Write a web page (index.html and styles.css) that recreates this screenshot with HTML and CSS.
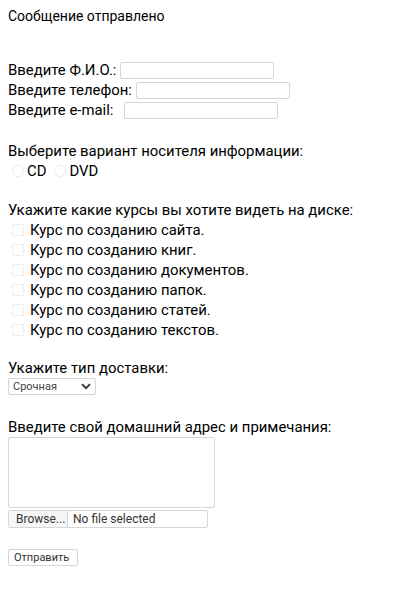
FILE: index.html
```html
<!DOCTYPE html>
<html lang="ru">
<head>
<meta charset="utf-8">
<link rel="stylesheet" href="styles.css">
</head>
<body>
<p class="msg">Сообщение отправлено</p>
<form class="form">
  <div class="group">
    <div class="row"><span>Введите Ф.И.О.:</span><span class="field w-fio"></span></div>
    <div class="row"><span>Введите телефон:</span><span class="field w-tel"></span></div>
    <div class="row"><span>Введите e-mail:</span><span class="field w-mail"></span></div>
  </div>
  <div class="group g2">
    <div class="row">Выберите вариант носителя информации:</div>
    <div class="row radios">
      <span class="radio"></span><span class="rl">CD</span>
      <span class="radio r2"></span><span class="rl">DVD</span>
    </div>
  </div>
  <div class="group g3">
    <div class="row">Укажите какие курсы вы хотите видеть на диске:</div>
    <div class="row chk"><span class="box"></span>Курс по созданию сайта.</div>
    <div class="row chk"><span class="box"></span>Курс по созданию книг.</div>
    <div class="row chk"><span class="box"></span>Курс по созданию документов.</div>
    <div class="row chk"><span class="box"></span>Курс по созданию папок.</div>
    <div class="row chk"><span class="box"></span>Курс по созданию статей.</div>
    <div class="row chk"><span class="box"></span>Курс по созданию текстов.</div>
  </div>
  <div class="group g4">
    <div class="row">Укажите тип доставки:</div>
    <div class="select"><span>Срочная</span>
      <svg class="chev" width="10" height="7" viewBox="0 0 10 7"><path d="M1 1.2 L5 5.2 L9 1.2" fill="none" stroke="#333" stroke-width="1.8"/></svg>
    </div>
  </div>
  <div class="group g5">
    <div class="row">Введите свой домашний адрес и примечания:</div>
    <div class="textarea"></div>
    <div class="file"><span class="browse">Browse...</span><span class="nofile">No file selected</span></div>
  </div>
  <div class="submit">Отправить</div>
</form>
</body>
</html>
```
FILE: styles.css
```css
html, body { margin: 0; padding: 0; background: #fff; }
body {
  padding: 0 8px;
  font-family: Roboto, "Noto Sans", sans-serif;
  color: #000;
  font-size: 14.9px;
  line-height: 20px;
}
.msg { margin: 6px 0 0; font-size: 14px; line-height: 20px; }
.form { display: flex; flex-direction: column; margin-top: 34px; }
.group { display: flex; flex-direction: column; }
.row { display: flex; align-items: center; height: 20px; white-space: nowrap; }
.field {
  display: inline-block; box-sizing: border-box;
  width: 154px; height: 17px; margin-left: 4px;
  border: 1px solid #d6d6d6; border-radius: 2px;
}
.w-mail { margin-left: 11px; }
.g2 { margin-top: 21px; }
.radios { padding-left: 4px; }
.radio {
  width: 12px; height: 12px; box-sizing: border-box;
  border: 1px solid #ececec; border-radius: 50%;
}
.r2 { margin-left: 8px; }
.rl { margin-left: 3px; }
.g3 { margin-top: 19px; }
.chk { padding-left: 4px; }
.box {
  width: 12px; height: 12px; box-sizing: border-box;
  border: 1px solid #ececec; border-radius: 2px; margin-right: 6px;
}
.g4 { margin-top: 18px; }
.select {
  box-sizing: border-box; width: 88px; height: 17px;
  border: 1px solid #d6d6d6; border-radius: 2px;
  display: flex; align-items: center; justify-content: space-between;
  padding: 0 4px 0 4px; font-size: 11px; color: #444;
}
.g5 { margin-top: 22px; }
.textarea {
  box-sizing: border-box; width: 207px; height: 71px;
  border: 1px solid #d6d6d6; border-radius: 2px;
}
.file {
  display: flex; box-sizing: border-box; width: 200px; height: 18px; margin-top: 2px;
  border: 1px solid #d6d6d6; border-radius: 2px; font-size: 12px; line-height: 16px; color: #333;
}
.browse {
  width: 59px; box-sizing: border-box; padding-left: 7px;
  border-right: 1px solid #d6d6d6; background: #f6f6f6;
}
.nofile { padding-left: 5px; }
.submit {
  align-self: flex-start; box-sizing: border-box; margin-top: 21px;
  height: 17px; padding: 0 5px; border: 1px solid #d6d6d6; border-radius: 2px;
  font-size: 11px; line-height: 15px; color: #333; width: 70px;
}
```
